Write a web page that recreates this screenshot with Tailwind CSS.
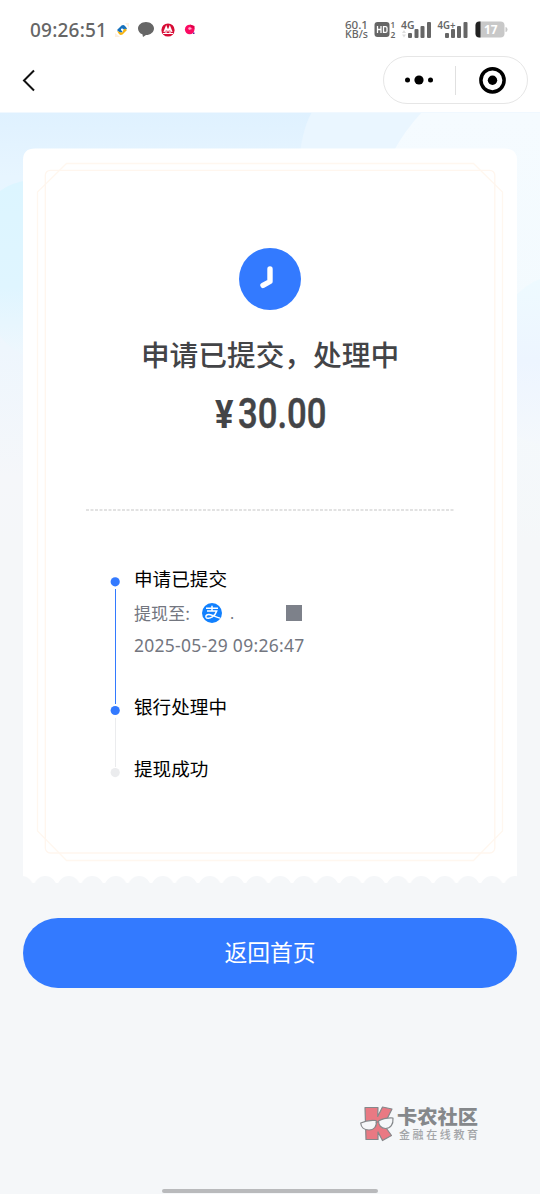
<!DOCTYPE html>
<html lang="zh-CN">
<head>
<meta charset="utf-8">
<title>提现</title>
<script src="https://cdn.jsdelivr.net/npm/@tailwindcss/browser@4"></script>
</head>
<body class="bg-[#f5f7f9]">
<div class="relative flex h-[1194px] w-[540px] flex-col overflow-hidden bg-[#f5f7f9] font-['Noto_Sans_CJK_SC',sans-serif]">
  <!-- status bar -->
  <header class="flex h-14 shrink-0 items-start justify-between bg-white pt-[19px] pr-[32px] pl-[30px]">
    <div class="flex h-[21px] items-center gap-[9px]">
      <span class="w-[77px] whitespace-nowrap pt-px font-['Noto_Sans'] text-[19px] leading-[21px] font-medium tracking-[0.2px] text-[#666]">09:26:51</span>
      <svg class="-ml-[1px] h-[14px] w-[14px]" viewBox="0 0 14 14"><path d="M10 0h4v5zM0 10v4h5z" fill="#fdf0df"/><path d="M2 7L6.500 2.500Q8.500 1.500 10 3l2 2.500-2 2L7.500 5.500Q5.500 5 6 7l2 2.200Q5 10 4 9z" fill="#1671bd"/><path d="M10 5.500l2 1.500-4.500 4.500Q5.500 12.500 4 11L2 8l4 1.500Q8.500 9.500 8 7.500z" fill="#f7b512"/></svg>
      <svg class="h-[15px] w-[16px]" viewBox="0 0 16 15"><path d="M8 0c4.400 0 8 2.900 8 6.400S12.400 13 8 13l-3 2-.6-2.700C1.700 11.200 0 9 0 6.400 0 2.900 3.600 0 8 0z" fill="#666"/></svg>
      <svg class="-ml-[2px] h-[14px] w-[14px]" viewBox="0 0 14 14"><circle cx="7" cy="7" r="6.600" fill="#d70c35"/><path d="M2 10.500h10M3 9l2.200-5.500L7 8l1.800-4.500L11 9M5 5v5m4-5v5" fill="none" stroke="#fff" stroke-width="1.200"/></svg>
      <svg class="h-[13px] w-[12px]" viewBox="0 0 12 13"><circle cx="5.700" cy="6.500" r="4.800" fill="#fb0a62"/><path d="M6 1.500L10.500 3v3L7 4z" fill="#e00048"/><path d="M4 5l2-1 2 2-3 1z" fill="#ffb0c8"/><path d="M9 9.500h1.500V11H9z" fill="#6a1d9c"/></svg>
    </div>
    <svg class="h-[21px] w-[163px] overflow-visible" viewBox="0 0 163 21" fill="#666" font-family="Noto Sans" font-weight="600">
      <text x="0" y="9.500" font-size="11.500" font-weight="500" textLength="23" lengthAdjust="spacingAndGlyphs">60.1</text>
      <text x="0" y="19.300" font-size="10" font-weight="500" textLength="23" lengthAdjust="spacingAndGlyphs">KB/s</text>
      <rect x="29.500" y="3" width="15" height="15" rx="3"/>
      <path d="M32.500 7v7m0-3.500h3.500m0-3.500v7M38.500 7v7M38.500 7.600h2q1.500 0 1.500 1.500v2.800q0 1.500-1.500 1.500h-2" fill="none" stroke="#fff" stroke-width="1.300"/>
      <text x="45.500" y="9" font-size="8">1</text><text x="45.500" y="18.500" font-size="8.500">2</text>
      <text x="56" y="9.800" font-size="10.500" textLength="13.500" lengthAdjust="spacingAndGlyphs">4G</text>
      <path d="M57 14l2-3 2 3zM57 15.500l2 3 2-3z" fill="#ddd"/>
      <rect x="63" y="14" width="4" height="5" rx="1"/><rect x="69.500" y="10" width="4" height="9" rx="1"/><rect x="75.500" y="7" width="4" height="12" rx="1"/><rect x="82" y="3" width="4" height="16" rx="1"/>
      <text x="92.500" y="9.800" font-size="10.500" textLength="18" lengthAdjust="spacingAndGlyphs">4G+</text>
      <rect x="100" y="14" width="4" height="5" rx="1"/><rect x="106" y="10" width="4" height="9" rx="1"/><rect x="112" y="7" width="4" height="12" rx="1"/><rect x="118.500" y="3" width="4" height="16" rx="1"/>
      <rect x="130.500" y="2.500" width="29" height="16" rx="4" fill="#c8c8c8"/><path d="M134.500 2.500h1v16h-1q-4 0-4-4v-8q0-4 4-4z" fill="#222"/><path d="M160.500 8q2 0 2 2.500t-2 2.500z" fill="#c8c8c8"/>
      <text x="139" y="15.200" font-size="12.500" font-weight="700" fill="#fff" textLength="13.500" lengthAdjust="spacingAndGlyphs">17</text>
    </svg>
  </header>
  <!-- navigation -->
  <nav class="flex h-14 shrink-0 items-start justify-between bg-white pr-3 pl-[22px]">
    <svg class="mt-[13px] h-[23px] w-[14px]" viewBox="0 0 14 23"><path d="M12 1.500L2 11.500l10 10" fill="none" stroke="#111" stroke-width="2"/></svg>
    <div class="flex h-12 w-[145px] items-center rounded-full border border-[#e6e6e6]">
      <svg class="w-[71px]" height="28" viewBox="0 0 71 28"><circle cx="23.500" cy="14" r="2.500"/><circle cx="35" cy="14" r="4.600"/><circle cx="46.500" cy="14" r="2.500"/></svg>
      <div class="h-[29px] w-px bg-[#e0e0e0]"></div>
      <svg class="w-[71px]" height="28" viewBox="0 0 71 28"><circle cx="36.500" cy="14.300" r="11.600" fill="none" stroke="#000" stroke-width="3.500"/><circle cx="36.500" cy="14.300" r="4.700"/></svg>
    </div>
  </nav>
  <main class="relative flex flex-1 flex-col px-[23px] pt-[36px]">
    <svg class="absolute top-0 left-0 h-[430px] w-[540px]" viewBox="0 0 540 430">
      <defs>
        <linearGradient id="sky" x2="0" y2="1"><stop stop-color="#dff1ff"/><stop offset=".15" stop-color="#e7f5ff"/><stop offset=".55" stop-color="#eef6fd"/><stop offset=".85" stop-color="#f5f7fa"/><stop offset="1" stop-color="#f5f7f9"/></linearGradient>
        <linearGradient id="cyan" x2="0" y2="1"><stop stop-color="#dcf5ff"/><stop offset=".6" stop-color="#dff5ff"/><stop offset="1" stop-color="#eff7fd"/></linearGradient>
        <linearGradient id="pale" x2="0" y2="1"><stop stop-color="#f5fbff"/><stop offset=".5" stop-color="#f3fafe"/><stop offset="1" stop-color="#f5f7f9"/></linearGradient>
        <linearGradient id="glow" x2="0" y2="1"><stop stop-color="#eefaff"/><stop offset=".5" stop-color="#edf5ff"/><stop offset="1" stop-color="#f4f8fc"/></linearGradient>
      </defs>
      <rect width="540" height="430" fill="url(#sky)"/>
      <path d="M0 79Q12 70 30 68V246Q10 238 0 224z" fill="url(#cyan)"/>
      <path d="M312 0Q301 18 298 60H450V0z" fill="#eaf6ff"/>
      <path d="M422 0Q405 18 392 42V430H540V0z" fill="url(#pale)"/>
      <path d="M510 190Q525 172 540 167V332Q525 330 510 320z" fill="url(#glow)"/>
      <path d="M0 .5H540" stroke="#f0f8ff"/>
    </svg>
    <!-- receipt -->
    <section class="relative flex h-[735px] w-[494px] flex-col items-center pt-[100px]">
      <svg class="absolute inset-0 h-[735px] w-[494px]" viewBox="0 0 494 735">
        <defs><pattern id="scallop" x="10.500" y="727" width="23.500" height="9" patternUnits="userSpaceOnUse"><circle cx="11.750" cy="12.500" r="11.400" fill="#f5f7f9"/></pattern></defs>
        <path d="M0 12Q0 .5 12 .5H482Q494 .5 494 12V735H0z" fill="#fff"/>
        <rect y="727" width="494" height="8" fill="url(#scallop)"/>
        <path d="M43.500 15.500H450.500L479.500 44V683L450.500 712.500H43.500L14.500 683V44z" fill="none" stroke="#fff7ef" stroke-width="1.300"/>
        <rect x="22.300" y="22.300" width="449.500" height="682.700" rx="5" fill="none" stroke="#fff6ee" stroke-width="1.300"/>
      </svg>
      <svg class="relative h-[62px] w-[62px] shrink-0" viewBox="0 0 62 62"><circle cx="31" cy="31" r="31" fill="#337aff"/><path d="M31 21v12.500L24 37.300" fill="none" stroke="#fff" stroke-width="5.400" stroke-linecap="round" stroke-linejoin="round"/></svg>
      <h1 class="relative mt-[24px] h-10 text-[28.700px] leading-10 font-medium whitespace-nowrap text-[#434447]">申请已提交，处理中</h1>
      <svg class="relative mt-[15px] h-[40px] w-[120px] shrink-0 overflow-visible" viewBox="0 0 120 40" fill="#434447" font-family="Roboto" font-weight="500">
        <text x="5" y="39" font-size="39" font-weight="700" textLength="18.500" lengthAdjust="spacingAndGlyphs">¥</text>
        <text x="28" y="39" font-size="43" font-weight="500" stroke="#434447" stroke-width=".5" textLength="88.500" lengthAdjust="spacingAndGlyphs">30.00</text>
      </svg>
      <svg class="relative mt-[80px] h-[2px] w-[368px] shrink-0" viewBox="0 0 368 2"><path d="M0 1H368" stroke="#d9d9d9" stroke-width="1.300" stroke-dasharray="3 1.500"/></svg>
      <div class="relative mt-[53px] flex w-full gap-[14px] pl-[87px]">
        <svg class="h-[220px] w-[10px] shrink-0" viewBox="0 0 10 220"><path d="M5.500 25V140" stroke="#337aff"/><path d="M5.500 154V203" stroke="#ebecee"/><circle cx="5.200" cy="17.800" r="4.600" fill="#337aff"/><circle cx="5.200" cy="146.500" r="4.600" fill="#337aff"/><circle cx="5.200" cy="208.600" r="4.600" fill="#ebecee"/></svg>
        <div class="-mt-px flex flex-col text-[18.600px] leading-[30px] text-black">
          <p>申请已提交</p>
          <div class="mt-[4px] flex h-[32px] items-center text-[17px] text-[#73767f]">
            <span class="-mt-px w-[68px] leading-[30px] tracking-[0.1px]">提现至:</span>
            <svg class="h-[20px] w-[20px]" viewBox="0 0 20 20"><circle cx="10" cy="10" r="10" fill="#1180fe"/><path d="M4 5.200h12M10 2.800v5M5 8h9.700c-.7 2.400-2.500 4.700-4.700 6-2.200 1.600-5.300 1.900-6 .2-.6-1.600 1-3 3.100-2.700 3 .4 6 2.200 11 3.600" fill="none" stroke="#fff" stroke-width="1.500"/></svg>
            <span class="ml-2 w-[56px] text-[15px]">.</span>
            <span class="h-4 w-4 bg-[#7d818a]"></span>
          </div>
          <p class="h-[32px] whitespace-nowrap font-['Noto_Sans'] text-[17.500px] leading-[33px] tracking-[0.270px] text-[#73767f]">2025-05-29 09:26:47</p>
          <p class="mt-[30px]">银行处理中</p>
          <p class="mt-[32px]">提现成功</p>
        </div>
      </div>
    </section>
    <button class="relative mt-[35px] h-[69.500px] w-[494px] rounded-full bg-[#337aff] pb-px text-[22.800px] leading-none text-white">返回首页</button>
    <!-- community mark -->
    <div class="absolute top-[994px] left-[360px] flex gap-[4px]">
      <svg class="h-[36px] w-[34px]" viewBox="0 0 34 36"><g stroke="#85888b" stroke-width="1.200" stroke-linejoin="round"><path d="M5 1.500h13l-.3 9L22.500 1l9.500 2-8 16 7.500 10.500-9 5L18 26v7.500H6z" fill="#e97983"/><path d="M.7 17q7-3.500 15.500-2.500c1 6-2.200 9.500-7.200 9.500S1 21 .7 17zM18.500 15q6-3.500 14.500-3c.5 6.500-2.500 10.500-7.500 10.500-4.500 0-7-3.500-7-7.500z" fill="#f5f7f9"/><path d="M16 17q1-1.500 2.500-1" fill="none"/></g></svg>
      <svg class="h-[36px] w-[80px] overflow-visible" viewBox="0 0 80 36" font-family="Noto Sans CJK SC"><text x="-1" y="18" font-size="19" font-weight="900" fill="#85888b" textLength="81" lengthAdjust="spacingAndGlyphs">卡农社区</text><text x="1" y="32.500" font-size="11" fill="#a3a5a8" font-weight="500" textLength="79">金融在线教育</text></svg>
    </div>
    <div class="absolute top-[1077px] left-[162px] h-[3.500px] w-[216px] rounded-full bg-[#b9babc]"></div>
  </main>
</div>
</body>
</html>
